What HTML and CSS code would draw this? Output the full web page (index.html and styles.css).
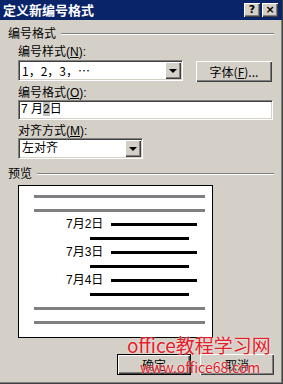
FILE: index.html
```html
<!DOCTYPE html>
<html lang="zh-CN">
<head>
  <meta charset="UTF-8" />
  <title>定义新编号格式</title>
  <link rel="stylesheet" href="styles.css">
</head>
<body>
  <div class="dialog">
    <div class="titlebar">
      <span class="title">定义新编号格式</span>
      <div class="caption-btns">
        <span class="cap-btn">?</span>
        <span class="cap-btn">×</span>
      </div>
    </div>

    <div class="content">
      <div class="group-head"><span>编号格式</span><i class="etch"></i></div>

      <div class="field-label">编号样式(<u>N</u>):</div>
      <div class="row">
        <div class="combo combo-style">
          <span class="combo-text">1，2，3，…</span>
          <span class="drop-btn"><i class="arrow"></i></span>
        </div>
        <button class="btn btn-font">字体(<u>F</u>)...</button>
      </div>

      <div class="field-label">编号格式(<u>O</u>):</div>
      <div class="textbox">7 月<span class="field-code">2</span>日</div>

      <div class="field-label">对齐方式(<u>M</u>):</div>
      <div class="combo combo-align">
        <span class="combo-text">左对齐</span>
        <span class="drop-btn"><i class="arrow"></i></span>
      </div>

      <div class="group-head group-preview"><span>预览</span><i class="etch"></i></div>

      <div class="preview">
        <div class="pv-row"><i class="bar bar-gray"></i></div>
        <div class="pv-row"><i class="bar bar-gray"></i></div>
        <div class="pv-row"><span class="pv-num">7月2日</span><i class="bar bar-num"></i></div>
        <div class="pv-row"><i class="bar bar-sub"></i></div>
        <div class="pv-row"><span class="pv-num">7月3日</span><i class="bar bar-num"></i></div>
        <div class="pv-row"><i class="bar bar-sub"></i></div>
        <div class="pv-row"><span class="pv-num">7月4日</span><i class="bar bar-num"></i></div>
        <div class="pv-row"><i class="bar bar-sub"></i></div>
        <div class="pv-row"><i class="bar bar-gray"></i></div>
        <div class="pv-row"><i class="bar bar-gray"></i></div>
      </div>

      <div class="actions">
        <button class="btn btn-default">确定</button>
        <button class="btn">取消</button>
      </div>
    </div>

    <!-- site watermark over the buttons -->
    <div class="watermark">
      <span class="wm-big">office教程学习网</span>
      <span class="wm-url">www.office68.com</span>
    </div>
  </div>
</body>
</html>
```

FILE: styles.css
```css
body {
  margin: 0;
  background: #fff;
  font-family: "Liberation Sans", "Noto Sans CJK SC", sans-serif;
  font-size: 12px;
  color: #000;
}

.dialog {
  position: relative;
  width: 283px;
  height: 384px;
  box-sizing: border-box;
  background: #d4d0c8;
  border-right: 1px solid #404040;
  border-bottom: 1px solid #404040;
  box-shadow: inset -1px -1px 0 #808080;
  overflow: hidden;
}

/* title bar */
.titlebar {
  height: 20px;
  background: #0a246a;
  display: flex;
  justify-content: space-between;
  align-items: center;
  padding: 0 4px 0 3px;
}

.title {
  color: #fff;
  font-family: "Noto Sans CJK SC", sans-serif;
  font-weight: bold;
  font-size: 13px;
  line-height: 20px;
}

.caption-btns {
  display: flex;
  gap: 2px;
}

.cap-btn {
  width: 16px;
  height: 14px;
  box-sizing: border-box;
  background: #d4d0c8;
  box-shadow: inset 1px 1px 0 #fff, inset -1px -1px 0 #404040, inset -2px -2px 0 #808080;
  font-family: "DejaVu Sans", sans-serif;
  font-weight: bold;
  font-size: 11px;
  line-height: 14px;
  text-align: center;
}

/* body */
.content {
  padding: 7px 8px 0 8px;
}

.group-head {
  display: flex;
  align-items: center;
  gap: 5px;
  height: 14px;
  line-height: 14px;
}

.etch {
  flex: 1;
  border-top: 1px solid #808080;
  border-bottom: 1px solid #fff;
}

.group-preview {
  margin-top: 8px;
}

.field-label {
  margin: 4px 0 0 10px;
  line-height: 14px;
  height: 14px;
}

.field-label:first-of-type {
  margin-top: 5px;
}

.row {
  display: flex;
  align-items: flex-start;
  margin: 1px 0 0 10px;
}

/* sunken controls */
.combo,
.textbox {
  box-sizing: border-box;
  background: #fff;
  border: 1px solid;
  border-color: #808080 #fff #fff #808080;
  box-shadow: inset 1px 1px 0 #404040, inset -1px -1px 0 #d4d0c8;
}

.combo {
  display: flex;
  align-items: center;
  height: 21px;
  padding: 1px;
}

.combo-style {
  width: 165px;
}

.combo-align {
  width: 125px;
  margin-left: 10px;
}

.combo-text {
  flex: 1;
  padding-left: 2px;
  line-height: 17px;
  white-space: nowrap;
}

.combo-style .combo-text {
  font-family: "Noto Sans CJK SC", sans-serif;
}

.drop-btn {
  width: 16px;
  height: 17px;
  box-sizing: border-box;
  background: #d4d0c8;
  box-shadow: inset 1px 1px 0 #fff, inset -1px -1px 0 #404040, inset -2px -2px 0 #808080;
  display: flex;
  align-items: center;
  justify-content: center;
}

.arrow {
  width: 0;
  height: 0;
  border-left: 4px solid transparent;
  border-right: 4px solid transparent;
  border-top: 4px solid #000;
  margin-top: 1px;
}

.textbox {
  width: 255px;
  height: 20px;
  margin-left: 10px;
  padding-left: 2px;
  line-height: 17px;
}

.field-code {
  background: #c0c0c0;
}

/* raised buttons */
.btn {
  font-family: "Noto Sans CJK SC", sans-serif;
  font-size: 12px;
  color: #000;
  background: #d4d0c8;
  border: none;
  padding: 0;
  width: 74px;
  height: 21px;
  box-shadow: inset 1px 1px 0 #fff, inset -1px -1px 0 #404040, inset -2px -2px 0 #808080;
}

.btn-font {
  width: 76px;
  margin: 1px 0 0 13px;
}

.btn-default {
  border: 1px solid #000;
}

/* preview */
.preview {
  margin: 4px 0 0 10px;
  width: 195px;
  height: 153px;
  box-sizing: border-box;
  border: 1px solid #000;
  background: #fff;
  padding-top: 3px;
}

.pv-row {
  height: 14px;
  display: flex;
  align-items: center;
}

.bar {
  display: block;
  height: 3px;
}

.bar-gray {
  margin-left: 15px;
  width: 171px;
  background: #808080;
}

.pv-num {
  margin-left: 47px;
  width: 37px;
  line-height: 14px;
  white-space: nowrap;
}

.bar-num {
  margin-left: 8px;
  width: 86px;
  background: #000;
}

.bar-sub {
  margin-left: 71px;
  width: 99px;
  background: #000;
}

.actions {
  display: flex;
  justify-content: flex-end;
  gap: 9px;
  margin-top: 16px;
}

/* watermark */
.watermark {
  position: absolute;
  left: 127px;
  top: 334px;
  color: #e4202a;
  font-family: "Noto Sans CJK SC", sans-serif;
  text-shadow: 0 0 2px #fff;
}

.wm-big {
  display: block;
  font-size: 19px;
  line-height: 22px;
}

.wm-url {
  display: block;
  margin: 3px 0 0 13px;
  font-size: 14px;
  line-height: 16px;
}
```
